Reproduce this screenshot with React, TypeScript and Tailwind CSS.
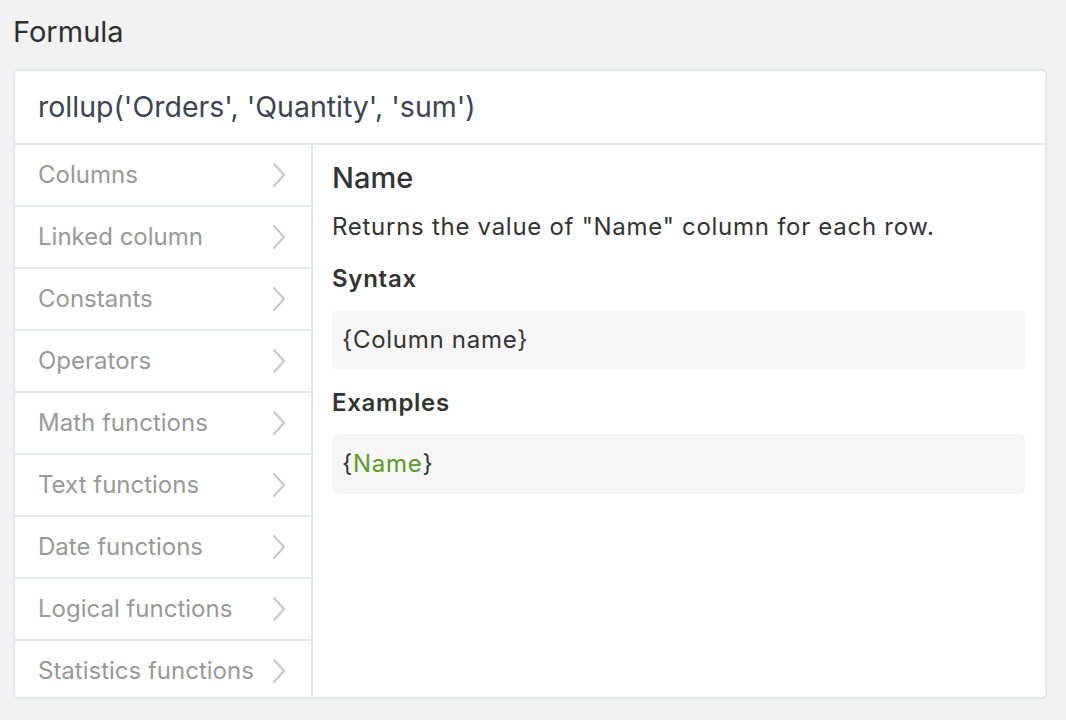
const CATEGORIES = [
  'Columns',
  'Linked column',
  'Constants',
  'Operators',
  'Math functions',
  'Text functions',
  'Date functions',
  'Logical functions',
  'Statistics functions',
];

function Chevron() {
  return (
    <svg width="14" height="26" viewBox="0 0 14 26" fill="none" className="shrink-0">
      <path d="M2 2 L12 13 L2 24" stroke="#c6c6c6" strokeWidth="2" strokeLinecap="round" strokeLinejoin="round" />
    </svg>
  );
}

export default function App() {
  return (
    <div
      className="h-[720px] w-full overflow-hidden bg-[#f2f2f2] px-[13px] text-[#333]"
      style={{ fontFamily: 'Inter, "Noto Sans", sans-serif' }}
    >
      <div className="pt-[13px] text-[29px] leading-[38px] text-[#2f2f2f]">Formula</div>

      <div className="mt-[18px] flex h-[630px] w-[1034px] flex-col overflow-hidden rounded-[6px] border-2 border-[#e4e7eb] bg-white">
        <div className="flex h-[74px] shrink-0 items-center border-b-2 border-[#e4e7eb] px-[23px] text-[28.5px] text-[#3d4550]">
          rollup('Orders', 'Quantity', 'sum')
        </div>

        <div className="flex min-h-0 flex-1">
          <div className="w-[298px] shrink-0 border-r-2 border-[#e4e7eb]">
            {CATEGORIES.map((name) => (
              <div
                key={name}
                className="flex h-[62px] items-center justify-between border-b-2 border-[#e4e7eb] pl-[23px] pr-[25px] text-[24px] text-[#999]"
              >
                <span>{name}</span>
                <Chevron />
              </div>
            ))}
          </div>

          <div className="flex-1 pl-[19px] pr-[20px] pt-[15px] tracking-[0.045em]">
            <div className="text-[29px] font-medium leading-[36px] tracking-normal text-[#333]">Name</div>
            <div className="mt-[15px] text-[24px] leading-[32px]">
              Returns the value of "Name" column for each row.
            </div>
            <div className="mt-[20px] text-[24px] font-semibold leading-[32px]">Syntax</div>
            <div className="mt-[15px] flex h-[60px] items-center rounded-[6px] bg-[#f6f6f6] px-[10px] text-[24px]">
              {'{Column name}'}
            </div>
            <div className="mt-[17px] text-[24px] font-semibold leading-[32px]">Examples</div>
            <div className="mt-[15px] flex h-[60px] items-center rounded-[6px] bg-[#f6f6f6] px-[10px] text-[24px]">
              {'{'}
              <span className="text-[#5a9a2a]">Name</span>
              {'}'}
            </div>
          </div>
        </div>
      </div>
    </div>
  );
}
